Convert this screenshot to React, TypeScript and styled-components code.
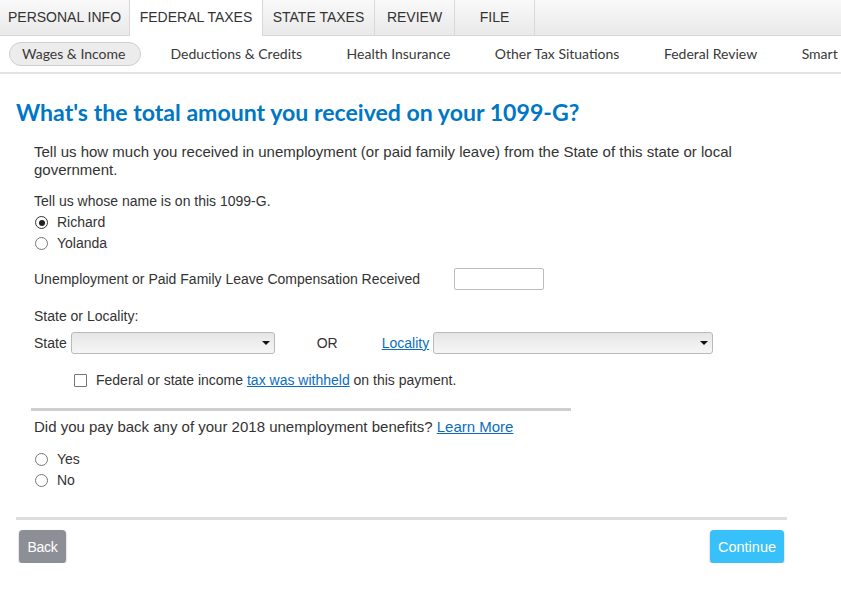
import styled, {createGlobalStyle, css} from "styled-components";

const GlobalStyle = createGlobalStyle`
    html, body {
        margin: 0;
        padding: 0;
        background: #fff;
    }

    body {
        font-family: "Liberation Sans", Arial, sans-serif;
        font-size: 14px;
        color: #333;
    }

    * {
        box-sizing: border-box;
    }
`

const topTabs = ['PERSONAL INFO', 'FEDERAL TAXES', 'STATE TAXES', 'REVIEW', 'FILE']
const tabWidths = [130, 134, 112, 80, 80]
const subTabs = ['Wages & Income', 'Deductions & Credits', 'Health Insurance', 'Other Tax Situations', 'Federal Review', 'Smart Check']

const STopBar = styled.div`
    display: flex;
    height: 36px;
    background: linear-gradient(#f9f9f9, #e9e9e9);
    border-bottom: 1px solid #d6d6d6;
`

const STopTab = styled.div<{ $active?: boolean, $width: number }>`
    width: ${({$width}) => $width}px;
    display: flex;
    align-items: center;
    justify-content: center;
    font-size: 14px;
    color: #333;
    border-right: 1px solid #d8d8d8;
    padding-bottom: 2px;

    ${({$active}) => $active && css`
        background: #fff;
        height: 36px;
        margin-bottom: -1px;
        border-left: 1px solid #d8d8d8;
        margin-left: -1px;
    `}
`

const SSubBar = styled.div`
    display: flex;
    align-items: center;
    height: 38px;
    padding-left: 9px;
    border-bottom: 2px solid #e3e3e3;
    white-space: nowrap;
    overflow: hidden;
`

const SSubTab = styled.div<{ $active?: boolean }>`
    font-family: Lato, "Open Sans", sans-serif;
    font-size: 14px;
    color: #393939;
    height: 24px;
    line-height: 22px;
    padding: 0 13px;
    margin-right: 16.5px;
    border-radius: 12px;
    border: 1px solid transparent;

    ${({$active}) => $active && css`
        background: #ececec;
        border-color: #cfcfcf;
        padding: 0 15px 0 12px;
        margin-right: 15px;
    `}
`

const SMain = styled.main`
    width: 771px;
    margin-left: 16px;
`

const STitle = styled.h1`
    margin: 24px 0 17px;
    font-family: Lato, "Open Sans", sans-serif;
    font-weight: 700;
    font-size: 23.1px;
    color: #0077c5;
`

const SForm = styled.div`
    padding-left: 18px;
    line-height: 17px;
`

const SText = styled.p<{ $mt?: number, $lead?: boolean }>`
    margin: ${({$mt}) => $mt ?? 0}px 0 0;
    max-width: 712px;
    font-size: ${({$lead}) => $lead ? 15 : 14}px;
    line-height: ${({$lead}) => $lead ? 18 : 17}px;
`

const SRadioList = styled.div<{ $mt?: number }>`
    display: flex;
    flex-direction: column;
    gap: 4px;
    margin-top: ${({$mt}) => $mt ?? 4}px;
`

const SRadioRow = styled.label<{ $indent?: number }>`
    display: flex;
    align-items: center;
    gap: 9px;
    height: 17px;
    padding-left: ${({$indent}) => 1 + ($indent ?? 0)}px;
`

const SRadioDot = styled.span<{ $checked?: boolean }>`
    width: 13px;
    height: 13px;
    border-radius: 50%;
    border: 1px solid #767676;
    background: #fff;
    position: relative;

    ${({$checked}) => $checked && css`
        border-color: #333;
        &::after {
            content: '';
            position: absolute;
            left: 2.5px;
            top: 2.5px;
            width: 6px;
            height: 6px;
            border-radius: 50%;
            background: #222;
        }
    `}
`

const SFieldRow = styled.div<{ $mt?: number }>`
    display: flex;
    align-items: center;
    margin-top: ${({$mt}) => $mt ?? 0}px;
`

const SInput = styled.div`
    width: 90px;
    height: 22px;
    margin-left: 34px;
    border: 1px solid #bdbdbd;
    border-radius: 2px;
    background: #fff;
`

const SSelect = styled.div<{ $width: number }>`
    width: ${({$width}) => $width}px;
    height: 22px;
    margin-left: 4px;
    border: 1px solid #b9b9b9;
    border-radius: 3px;
    background: linear-gradient(#e6e6e6, #f6f6f6);
    position: relative;

    &::after {
        content: '';
        position: absolute;
        right: 4px;
        top: 8px;
        border-left: 4px solid transparent;
        border-right: 4px solid transparent;
        border-top: 4px solid #111;
    }
`

const SOr = styled.span`
    margin: 0 44px 0 42px;
`

const SLink = styled.a`
    color: #0a6ebd;
    text-decoration: underline;
    cursor: pointer;
`

const SCheckRow = styled.label`
    display: flex;
    align-items: center;
    gap: 9px;
    margin: 18px 0 0 40px;
`

const SCheckBox = styled.span`
    width: 13px;
    height: 13px;
    border: 1px solid #767676;
    border-radius: 1px;
    background: #fff;
`

const SDivider = styled.hr<{ $width: number, $color: string }>`
    width: ${({$width}) => $width}px;
    height: 3px;
    border: none;
    background: ${({$color}) => $color};
    margin: 0;
`

const SSection = styled.div`
    margin-left: -3px;
    margin-top: 19px;
`

const SQuestion = styled.p`
    margin: 7px 0 0 3px;
    font-size: 15px;
`

const SFooter = styled.div`
    margin-top: 28px;
`

const SButtons = styled.div`
    display: flex;
    justify-content: space-between;
    padding: 10px 3px 0 3px;
`

const SButton = styled.button<{ $variant: 'back' | 'continue' }>`
    height: 33px;
    border: none;
    border-radius: 4px;
    color: #fff;
    font-family: "Liberation Sans", Arial, sans-serif;
    box-shadow: 0 1px 2px rgba(0, 0, 0, 0.35);
    cursor: pointer;

    ${({$variant}) => $variant === 'back' ? css`
        width: 47px;
        background: #8d8f97;
        font-size: 14px;
        letter-spacing: -0.3px;
    ` : css`
        width: 74px;
        background: #38c0fb;
        font-size: 14.5px;
    `}
`

export default function App() {
    return (<>
        <GlobalStyle/>
        <STopBar>
            {topTabs.map((t, i) => (
                <STopTab key={t} $width={tabWidths[i]} $active={i === 1}>{t}</STopTab>
            ))}
        </STopBar>
        <SSubBar>
            {subTabs.map((t, i) => (
                <SSubTab key={t} $active={i === 0}>{t}</SSubTab>
            ))}
        </SSubBar>

        <SMain>
            <STitle>What's the total amount you received on your 1099-G?</STitle>
            <SForm>
                <SText $lead>
                    Tell us how much you received in unemployment (or paid family leave) from the State of this state
                    or local government.
                </SText>
                <SText $mt={14}>Tell us whose name is on this 1099-G.</SText>
                <SRadioList>
                    <SRadioRow><SRadioDot $checked/>Richard</SRadioRow>
                    <SRadioRow><SRadioDot/>Yolanda</SRadioRow>
                </SRadioList>

                <SFieldRow $mt={16}>
                    <span>Unemployment or Paid Family Leave Compensation Received</span>
                    <SInput/>
                </SFieldRow>

                <SText $mt={18}>State or Locality:</SText>
                <SFieldRow $mt={7}>
                    <span>State</span>
                    <SSelect $width={204}/>
                    <SOr>OR</SOr>
                    <SLink>Locality</SLink>
                    <SSelect $width={280}/>
                </SFieldRow>

                <SCheckRow>
                    <SCheckBox/>
                    <span>Federal or state income <SLink>tax was withheld</SLink> on this payment.</span>
                </SCheckRow>

                <SSection>
                    <SDivider $width={540} $color="#cfcfcf"/>
                    <SQuestion>
                        Did you pay back any of your 2018 unemployment benefits? <SLink>Learn More</SLink>
                    </SQuestion>
                    <SRadioList $mt={16}>
                        <SRadioRow $indent={3}><SRadioDot/>Yes</SRadioRow>
                        <SRadioRow $indent={3}><SRadioDot/>No</SRadioRow>
                    </SRadioList>
                </SSection>
            </SForm>

            <SFooter>
                <SDivider $width={771} $color="#dedede"/>
                <SButtons>
                    <SButton $variant="back">Back</SButton>
                    <SButton $variant="continue">Continue</SButton>
                </SButtons>
            </SFooter>
        </SMain>
    </>)
}
